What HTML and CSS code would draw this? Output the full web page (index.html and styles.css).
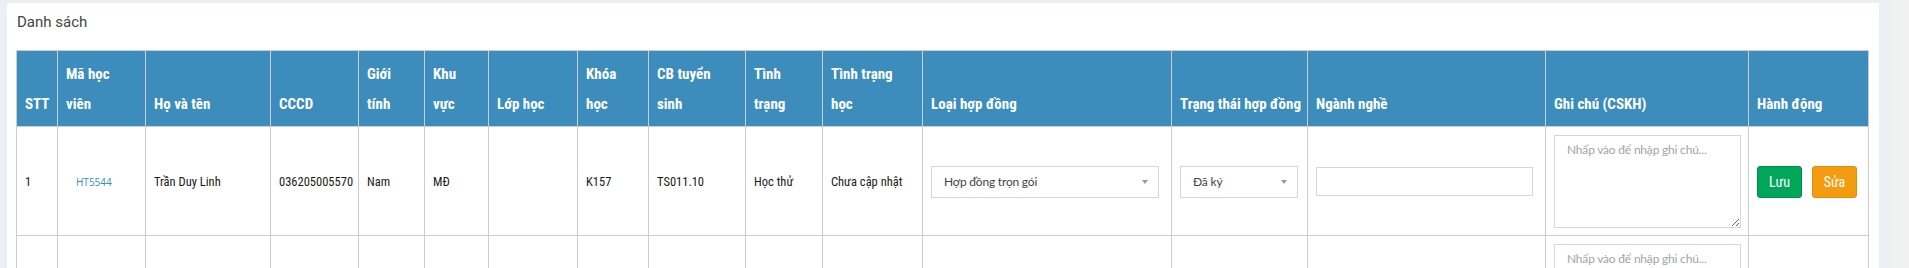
FILE: index.html
```html
<!DOCTYPE html>
<html lang="vi">
<head>
  <meta charset="UTF-8">
  <title>Danh sách học viên</title>
  <link rel="stylesheet" href="styles.css">
</head>
<body>

  <div class="content">
    <div class="box">
      <h3 class="box-title">Danh sách</h3>

      <!-- Student list -->
      <table class="list">
        <colgroup>
          <col style="width:41px"><col style="width:88px"><col style="width:125px"><col style="width:88px">
          <col style="width:66px"><col style="width:64px"><col style="width:89px"><col style="width:71px">
          <col style="width:97px"><col style="width:77px"><col style="width:100px"><col style="width:249px">
          <col style="width:136px"><col style="width:238px"><col style="width:203px"><col style="width:120px">
        </colgroup>
        <thead>
          <tr>
            <th>STT</th>
            <th>Mã học viên</th>
            <th>Họ và tên</th>
            <th>CCCD</th>
            <th>Giới tính</th>
            <th>Khu vực</th>
            <th>Lớp học</th>
            <th>Khóa học</th>
            <th>CB tuyển sinh</th>
            <th>Tình trạng</th>
            <th>Tình trạng học</th>
            <th>Loại hợp đồng</th>
            <th class="nowrap">Trạng thái hợp đồng</th>
            <th>Ngành nghề</th>
            <th>Ghi chú (CSKH)</th>
            <th>Hành động</th>
          </tr>
        </thead>
        <tbody>
          <tr>
            <td>1</td>
            <td><a class="code" href="#">HT5544</a></td>
            <td>Trần Duy Linh</td>
            <td>036205005570</td>
            <td>Nam</td>
            <td>MĐ</td>
            <td></td>
            <td>K157</td>
            <td>TS011.10</td>
            <td>Học thử</td>
            <td>Chưa cập nhật</td>
            <td>
              <div class="select sel-wide">
                <span>Hợp đồng trọn gói</span>
                <b class="caret"></b>
              </div>
            </td>
            <td>
              <div class="select sel-narrow">
                <span>Đã ký</span>
                <b class="caret"></b>
              </div>
            </td>
            <td><input type="text" class="field"></td>
            <td><textarea class="note" placeholder="Nhấp vào để nhập ghi chú..."></textarea></td>
            <td>
              <div class="actions">
                <button class="btn btn-save">Lưu</button>
                <button class="btn btn-edit">Sửa</button>
              </div>
            </td>
          </tr>
          <tr>
            <td></td><td></td><td></td><td></td><td></td><td></td><td></td><td></td>
            <td></td><td></td><td></td><td></td><td></td><td></td>
            <td><textarea class="note" placeholder="Nhấp vào để nhập ghi chú..."></textarea></td>
            <td></td>
          </tr>
        </tbody>
      </table>
    </div>
  </div>

  <!-- scrollbar gutter -->
  <div class="gutter"></div>

</body>
</html>
```

FILE: styles.css
```css
/* Page */
body {
  margin: 0;
  height: 268px;
  overflow: hidden;
  display: flex;
  background: #ecf0f5;
  font-family: "Roboto", sans-serif;
  font-stretch: semi-condensed;
  font-size: 12.5px;
  color: #1a1a1a;
}

.content {
  flex: 1;
  padding: 3px 13px 0 7px;
}

.gutter {
  width: 18px;
  background: #f1f1f1;
}

/* Box */
.box {
  background: #fff;
  padding: 6px 10px 0 9px;
}

.box-title {
  margin: 0 0 18px 1px;
  padding-top: 3px;
  font-family: "Roboto", sans-serif;
  font-stretch: normal;
  font-weight: 400;
  font-size: 15px;
  line-height: 20px;
  color: #444;
}

/* Table */
.list {
  width: 1852px;
  table-layout: fixed;
  border-collapse: collapse;
}

.list th,
.list td {
  border: 1px solid #cdcdcd;
  text-align: left;
}

.list th {
  padding: 8px 8px 7px;
  background: #3c8dbc;
  color: #fff;
  font-family: "Roboto", sans-serif;
  font-stretch: condensed;
  font-weight: 700;
  font-size: 15px;
  line-height: 30px;
  vertical-align: bottom;
}

.list th.nowrap {
  white-space: nowrap;
}

.list td {
  padding: 8px 8px 7px;
  vertical-align: middle;
}

.code {
  padding-left: 10px;
  color: #3c8dbc;
  font-family: "Open Sans", sans-serif;
  font-stretch: normal;
  font-size: 10px;
  text-decoration: none;
}

/* Select2-like dropdowns */
.select {
  display: flex;
  align-items: center;
  justify-content: space-between;
  box-sizing: border-box;
  height: 32px;
  padding: 0 10px 0 12px;
  border: 1px solid #d2d6de;
  font-family: "Lato", sans-serif;
  font-stretch: normal;
  font-size: 12px;
  letter-spacing: -0.2px;
  color: #444;
}

.sel-wide { width: 228px; }
.sel-narrow { width: 118px; }

.caret {
  width: 0;
  height: 0;
  border-style: solid;
  border-width: 4px 3px 0;
  border-color: #999 transparent transparent;
}

.field {
  display: block;
  box-sizing: border-box;
  width: 217px;
  height: 29px;
  border: 1px solid #d2d6de;
}

.note {
  display: block;
  box-sizing: border-box;
  width: 187px;
  height: 93px;
  padding: 6px 12px;
  border: 1px solid #d2d6de;
  font-family: "Lato", sans-serif;
  font-size: 12px;
  letter-spacing: -0.2px;
}

.note::placeholder {
  color: #a4a4a4;
}

/* Buttons */
.actions {
  display: flex;
  gap: 10px;
}

.btn {
  width: 45px;
  height: 32px;
  padding: 0;
  border-radius: 3px;
  border: 1px solid;
  color: #fff;
  font-family: "Roboto", sans-serif;
  font-stretch: semi-condensed;
  font-size: 14px;
}

.btn-save {
  background: #00a65a;
  border-color: #008d4c;
}

.btn-edit {
  background: #f39c12;
  border-color: #e08e0b;
}
```
